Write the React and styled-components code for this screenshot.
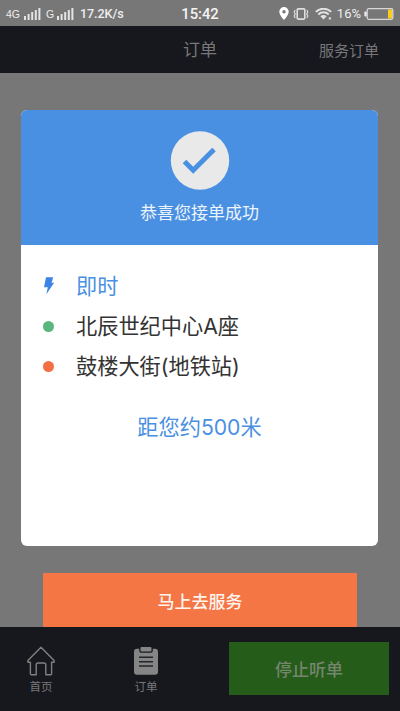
import React from 'react'
import styled, { createGlobalStyle } from 'styled-components'


export default function App() {
    return (
        <>
            <GlobalStyle />
            <Screen>
                <StatusBar>
                    <StatusSide>
                        <Network>4G</Network>
                        <Signal />
                        <Network $second>G</Network>
                        <Signal />
                        <Speed>17.2K/s</Speed>
                    </StatusSide>
                    <Clock>15:42</Clock>
                    <StatusSide $right>
                        <PinIcon />
                        <VibrateIcon />
                        <WifiIcon />
                        <Percent>16%</Percent>
                        <BatteryIcon />
                    </StatusSide>
                </StatusBar>

                <NavBar>
                    <NavTitle>订单</NavTitle>
                    <NavLink>服务订单</NavLink>
                </NavBar>

                <Content>
                    <Card>
                        <CardHead>
                            <CheckIcon />
                            <CardTitle>恭喜您接单成功</CardTitle>
                        </CardHead>
                        <CardBody>
                            <Row $color="#4a90e2">
                                <Mark><BoltIcon /></Mark>
                                <RowText>即时</RowText>
                            </Row>
                            <Row>
                                <Mark><Dot $color="#5ab67c" /></Mark>
                                <RowText>北辰世纪中心A座</RowText>
                            </Row>
                            <Row>
                                <Mark><Dot $color="#f27043" /></Mark>
                                <RowText>鼓楼大街(地铁站)</RowText>
                            </Row>
                            <Distance>距您约500米</Distance>
                        </CardBody>
                    </Card>
                    <ServeButton>马上去服务</ServeButton>
                </Content>

                <TabBar>
                    <Tab>
                        <HomeIcon />
                        <TabLabel>首页</TabLabel>
                    </Tab>
                    <Tab $second>
                        <OrderIcon />
                        <TabLabel>订单</TabLabel>
                    </Tab>
                    <StopButton>停止听单</StopButton>
                </TabBar>
            </Screen>
        </>
    )
}


const Signal = () => (
    <SignalSvg width="17" height="12" viewBox="0 0 17 12" fill="#e4e4e4">
        <rect x="0" y="8" width="2" height="4" />
        <rect x="3.6" y="6" width="2" height="6" />
        <rect x="7.2" y="4" width="2" height="8" />
        <rect x="10.8" y="2" width="2" height="10" />
        <rect x="14.4" y="0" width="2" height="12" />
    </SignalSvg>
)

const PinIcon = () => (
    <svg width="10" height="13" viewBox="0 0 10 13">
        <path fill="#fff" fillRule="evenodd" d="M5 0a4.7 4.7 0 0 0-4.7 4.7C.3 8 5 13 5 13s4.7-5 4.7-8.3A4.7 4.7 0 0 0 5 0zm0 3a1.7 1.7 0 1 1 0 3.4A1.7 1.7 0 0 1 5 3z" />
    </svg>
)

const VibrateIcon = () => (
    <VibrateSvg width="16" height="12" viewBox="0 0 16 12" fill="none" stroke="#dedede" strokeWidth="1.6">
        <rect x="4.2" y="0.9" width="7.6" height="10.2" rx="1" />
        <path d="M2.2 2l-1 2 1 2-1 2 1 2M13.8 2l1 2-1 2 1 2-1 2" strokeWidth="1.2" />
    </VibrateSvg>
)

const WifiIcon = () => (
    <WifiSvg width="17" height="12" viewBox="0 0 17 12" fill="none" stroke="#e2e2e2" strokeWidth="2">
        <path d="M0.8 3.9a11 11 0 0 1 15.4 0" />
        <path d="M3.3 6.5a7.4 7.4 0 0 1 10.4 0" />
        <path d="M8.5 11.6L5.3 8.3a4.6 4.6 0 0 1 6.4 0z" fill="#e2e2e2" stroke="none" />
        <path d="M13.8 10.4h2.2" />
    </WifiSvg>
)

const BatteryIcon = () => (
    <svg width="30" height="12" viewBox="0 0 30 12">
        <rect x="3.2" y="0.7" width="25.6" height="10.6" rx="1.5" fill="none" stroke="#d8d8d8" strokeWidth="1.3" />
        <rect x="0.3" y="3.5" width="2.4" height="5" rx="1" fill="#e8e8e8" />
        <rect x="24" y="1.5" width="4" height="9" fill="#fccb1e" />
    </svg>
)

const CheckIcon = () => (
    <svg width="60" height="60" viewBox="0 0 60 60">
        <circle cx="30" cy="29.5" r="29.2" fill="#e9e9e9" />
        <path d="M14.5 30.5l8.700 8.700 20.800-20.700" fill="none" stroke="#4a90e2" strokeWidth="5" />
    </svg>
)

const BoltIcon = () => (
    <svg width="12" height="18" viewBox="0 0 12 18">
        <path d="M3 0.300H10.200L8.500 5.700h2.600L3.400 17.200l1.400-7H1z" fill="#3c84e6" />
    </svg>
)

const HomeIcon = () => (
    <svg width="28" height="30" viewBox="0 0 28 30" fill="none" stroke="#808080" strokeWidth="1.400" strokeLinejoin="round">
        <path d="M14 1.200L0.900 14.400v1.800h2.500v11.500q0 1 1 1h4.800v-9.900q0-1.800 1.800-1.800h6q1.800 0 1.800 1.800v9.900h4.800q1 0 1-1V16.200h2.500v-1.800z" />
    </svg>
)

const OrderIcon = () => (
    <svg width="24" height="28" viewBox="0 0 24 28">
        <rect x="0" y="1.800" width="24" height="26" rx="3" fill="#858585" />
        <path d="M5.200 0v3.700q0 2 2 2h9.600q2 0 2-2V0z" fill="#17181d" />
        <rect x="6.500" y="0" width="11" height="4.500" rx="1" fill="#858585" />
        <path d="M5 10.300h14M5 14.700h14M5 19.100h14" stroke="#24252a" strokeWidth="1.500" />
    </svg>
)


const GlobalStyle = createGlobalStyle`
    * {
        box-sizing: border-box;
    }
    body {
        margin: 0;
        font-family: "Liberation Sans", "Noto Sans CJK SC", sans-serif;
    }
    svg {
        display: block;
        flex-shrink: 0;
    }
`

const Screen = styled.div`
    width: 400px;
    height: 711px;
    display: flex;
    flex-direction: column;
    overflow: hidden;
    background: #777777;
`

const StatusBar = styled.div`
    height: 26px;
    display: grid;
    grid-template-columns: 1fr auto 1fr;
    align-items: center;
    padding: 1px 6px 0;
    color: #eeeeee;
    white-space: nowrap;
`

const StatusSide = styled.div`
    display: flex;
    align-items: center;
    justify-content: ${({ $right }) => ($right ? 'flex-end' : 'flex-start')};
`

const Network = styled.span`
    width: ${({ $second }) => ($second ? '11px' : '18px')};
    margin-left: ${({ $second }) => ($second ? '5px' : '0')};
    font-size: 10.5px;
`

const SignalSvg = styled.svg`
    width: 17px;
`

const Speed = styled.span`
    margin-left: 6px;
    font-family: Roboto, sans-serif;
    font-size: 12.6px;
    font-weight: 500;
    letter-spacing: -0.1px;
`

const Clock = styled.div`
    font-family: Roboto, sans-serif;
    font-size: 14.8px;
    font-weight: 500;
    line-height: 24px;
    color: #f4f4f4;
`

const VibrateSvg = styled.svg`
    margin-left: 4px;
`

const WifiSvg = styled.svg`
    margin-left: 6px;
`

const Percent = styled.span`
    margin: 0 3px 0 5px;
    font-family: Roboto, sans-serif;
    font-size: 13px;
`

const NavBar = styled.div`
    height: 47px;
    flex-shrink: 0;
    display: grid;
    grid-template-columns: 1fr auto 1fr;
    align-items: center;
    padding: 2px 21px 0;
    background: #17181d;
    color: #77777a;
`

const NavTitle = styled.div`
    grid-column: 2;
    font-size: 17px;
    line-height: 24px;
`

const NavLink = styled.div`
    justify-self: end;
    font-size: 15px;
    line-height: 22px;
`

const Content = styled.div`
    flex: 1;
    min-height: 0;
    display: flex;
    flex-direction: column;
    align-items: center;
    padding-top: 37px;
`

const Card = styled.div`
    width: 357px;
    height: 436px;
    margin-right: 1px;
    flex-shrink: 0;
    border-radius: 6px;
    overflow: hidden;
    background: #ffffff;
    font-family: Inter, "Noto Sans CJK SC", sans-serif;
`

const CardHead = styled.div`
    height: 135px;
    display: flex;
    flex-direction: column;
    align-items: center;
    padding-top: 21px;
    background: #4a90e2;
`

const CardTitle = styled.div`
    margin-top: 10px;
    font-size: 17px;
    line-height: 24px;
    color: #eef4fc;
`

const CardBody = styled.div`
    padding-top: 21px;
`

const Row = styled.div`
    height: 40px;
    display: flex;
    align-items: center;
    color: ${({ $color }) => $color || '#333333'};
`

const Mark = styled.div`
    width: 55px;
    display: flex;
    justify-content: center;
`

const Dot = styled.div`
    width: 11px;
    height: 11px;
    border-radius: 50%;
    background: ${({ $color }) => $color};
`

const RowText = styled.div`
    font-size: 21.2px;
    line-height: 30px;
`

const Distance = styled.div`
    margin-top: 26px;
    text-align: center;
    font-size: 21.2px;
    line-height: 30px;
    color: #4a90e2;
`

const ServeButton = styled.button`
    width: 314px;
    height: 54px;
    margin-top: 27px;
    padding: 0;
    flex-shrink: 0;
    border: none;
    background: #f47645;
    color: #fff4ee;
    font-family: inherit;
    font-size: 17px;
    font-weight: 500;
`

const TabBar = styled.div`
    height: 84px;
    flex-shrink: 0;
    display: flex;
    align-items: flex-start;
    padding: 15px 11px 0 17px;
    background: #17181d;
`

const Tab = styled.div`
    width: 48px;
    height: 53px;
    margin-left: ${({ $second }) => ($second ? '57px' : '0')};
    padding-top: ${({ $second }) => ($second ? '5px' : '4px')};
    display: flex;
    flex-direction: column;
    align-items: center;
    justify-content: space-between;
`

const TabLabel = styled.div`
    font-size: 11.5px;
    line-height: 16px;
    color: #77777a;
`

const StopButton = styled.button`
    width: 160px;
    height: 53px;
    margin-left: auto;
    padding: 0;
    border: none;
    background: #255c19;
    color: #75866f;
    font-family: inherit;
    font-size: 17px;
    font-weight: 500;
`
